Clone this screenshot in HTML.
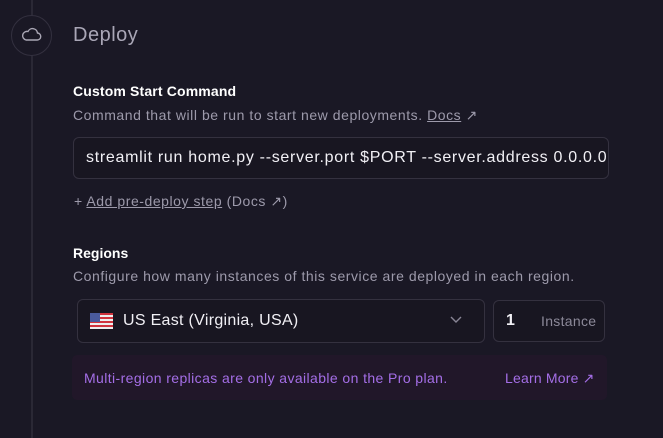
<!DOCTYPE html>
<html><head><style>
body{margin:0;width:663px;height:438px;background:#1a1825;font-family:"Liberation Sans",sans-serif;position:relative;overflow:hidden;color:#fff}
.a{position:absolute;white-space:nowrap}
.line{position:absolute;left:31px;top:0;width:2px;height:438px;background:#2a2835}
.circ{position:absolute;left:11px;top:15px;width:39px;height:39px;border:1px solid #33303f;border-radius:50%;background:#1a1825}
.box{position:absolute;border:1px solid #34313f;border-radius:6px;background:#181621}
.grey{color:#9d9aab;letter-spacing:0.55px}
</style></head><body>
<div class="line"></div>
<div class="circ"><svg width="39" height="39" viewBox="0 0 39 39"><path d="M14 24h11a3.5 3.5 0 0 0 .5-7 5 5 0 0 0-9.5-1.5A4.3 4.3 0 0 0 14 24z" fill="none" stroke="#aaa7b5" stroke-width="1.4"/></svg></div>
<div class="a" style="left:73px;top:24px;font-size:20px;color:#a9a6b6;letter-spacing:0.5px">Deploy</div>
<div class="a" style="left:73px;top:83px;font-size:14px;font-weight:bold;letter-spacing:0.15px">Custom Start Command</div>
<div class="a grey" style="left:73px;top:107px;font-size:14px">Command that will be run to start new deployments. <span style="text-decoration:underline">Docs</span> ↗</div>
<div class="box" style="left:73px;top:137px;width:534px;height:40px"></div>
<div class="a" style="left:86px;top:149px;font-size:16px;color:#f1f0f5;letter-spacing:0.7px">streamlit run home.py --server.port $PORT --server.address 0.0.0.0</div>
<div class="a grey" style="left:74px;top:193px;font-size:14px">+ <span style="text-decoration:underline">Add pre-deploy step</span> (Docs ↗)</div>
<div class="a" style="left:73px;top:245px;font-size:14px;font-weight:bold">Regions</div>
<div class="a grey" style="left:73px;top:268px;font-size:14px">Configure how many instances of this service are deployed in each region.</div>
<div class="box" style="left:77px;top:299px;width:406px;height:42px"></div>
<svg class="a" style="left:90px;top:313px" width="23" height="16"><rect width="23" height="16" fill="#eee"/><g fill="#d0333d"><rect y="0" width="23" height="2"/><rect y="4" width="23" height="2"/><rect y="8" width="23" height="2"/><rect y="12" width="23" height="2"/></g><rect width="10" height="9" fill="#4a5a9c"/></svg>
<div class="a" style="left:123px;top:312px;font-size:16px;color:#f1f0f5;letter-spacing:0.3px">US East (Virginia, USA)</div>
<svg class="a" style="left:449px;top:315px" width="14" height="10"><path d="M2 2l5 5 5-5" fill="none" stroke="#888595" stroke-width="1.4"/></svg>
<div class="box" style="left:493px;top:300px;width:110px;height:40px"></div>
<div class="a" style="left:506px;top:312px;font-size:16px;font-weight:bold;color:#f1f0f5">1</div>
<div class="a" style="left:541px;top:313px;font-size:14px;color:#8c8999;letter-spacing:0.3px">Instance</div>
<div class="a" style="left:72px;top:355px;width:535px;height:45px;background:#211729;border-radius:5px"></div>
<div class="a" style="left:84px;top:370px;font-size:14px;color:#a46ee6;letter-spacing:0.4px">Multi-region replicas are only available on the Pro plan.</div>
<div class="a" style="left:505px;top:370px;font-size:14px;color:#a46ee6;letter-spacing:0.2px">Learn More ↗</div>
</body></html>
